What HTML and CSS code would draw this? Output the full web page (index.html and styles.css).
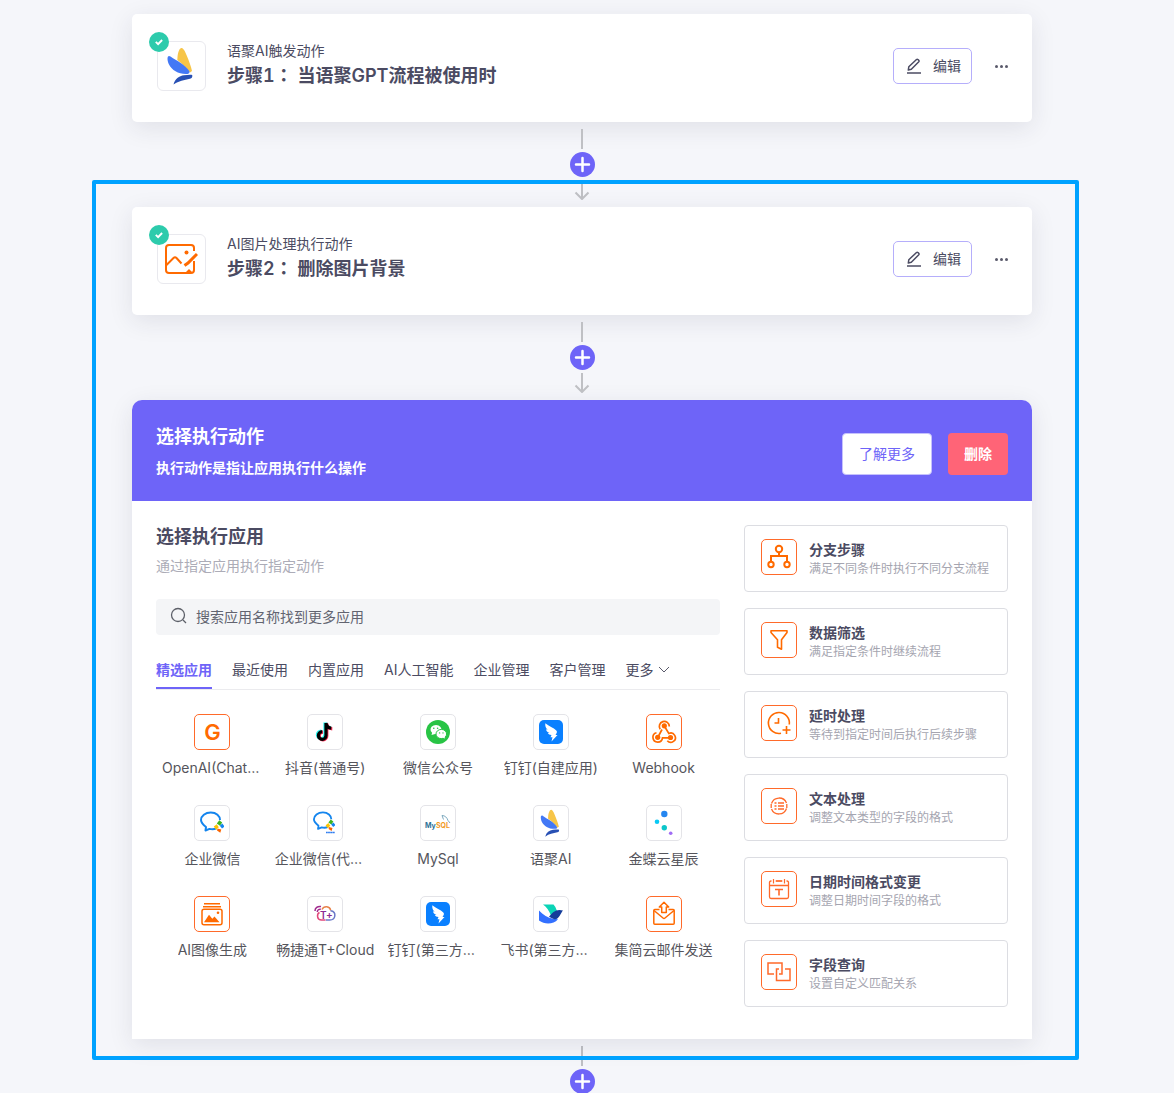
FILE: index.html
```html
<!DOCTYPE html>
<html lang="zh-CN">
<head>
    <meta charset="UTF-8">
    <meta name="viewport" content="width=device-width, initial-scale=1.0">
    <title>流程编辑</title>
    <link rel="stylesheet" href="styles.css">
</head>
<body>
    <!-- shared icons -->
    <svg class="sprite" aria-hidden="true">
        <symbol id="i-check" viewBox="0 0 20 20">
            <circle cx="10" cy="10" r="10" fill="#2dcbac"/>
            <path d="M6.8 9.9l2.3 2.3 4-4.2" fill="none" stroke="#fff" stroke-width="1.9"/>
        </symbol>
        <symbol id="i-pen" viewBox="0 0 16 16">
            <path d="M1 15h14" fill="none" stroke="currentColor" stroke-width="1.5"/>
            <path d="M2.3 12l.5-3.2 7.7-7.3q.7-.6 1.4 0l.9.9q.6.7 0 1.4L5.300 11.300z" fill="none" stroke="currentColor" stroke-width="1.5" stroke-linejoin="round"/>
        </symbol>
        <symbol id="i-arrow" viewBox="0 0 16 20">
            <path d="M8 0v19M1.500 12.500L8 19l6.500-6.500" fill="none" stroke="#bfc0c4" stroke-width="2"/>
        </symbol>
        <symbol id="i-plus" viewBox="0 0 25 25">
            <circle cx="12.500" cy="12.500" r="12.500" fill="#6e64f8"/>
            <path d="M12.500 6v13M6 12.500h13" stroke="#fff" stroke-width="2.500" stroke-linecap="round"/>
        </symbol>
        <symbol id="i-wing" viewBox="0 0 26 38">
            <path d="M10.500 10C11 5 12.500 1 14.500 1c1.500 0 3 2 5 7 2.500 6 4.500 11 5.500 16l-2 1.500C19 20 13 15 10.300 13z" fill="#f7c548"/>
            <path d="M.5 12C.4 9 1.800 8.300 3.500 9.500 10 14 18 17.500 22.300 24c.6 1.500 0 2.700-1.800 2.900C12 27.500 5 23.500 2 17.500.9 15.300.6 13.500.5 12z" fill="#4378f5"/>
            <path d="M6.500 37.500C8 32 12 29 17 28.300c3.500-.5 6.500-.8 8.200-.3.500 2-.3 3.200-2.200 3.700-6 1.300-11 2-16.500 5.800z" fill="#2850b4"/>
        </symbol>
        <symbol id="i-ding" viewBox="0 0 24 24">
            <rect width="24" height="24" rx="5" fill="#0a80ff"/>
            <path d="M6.300 3.200c3.700 3 8.200 4.300 11 7.300.8.900.8 1.800.2 2.800l-1 1.700h2l-6 6.500 1-4.300h-2l1-2.200c-1.900-.2-3-.9-3.700-2.100l1.700.1C8.300 12.200 7.300 11 7 9.300l1.700.5C6.800 8 6 5.900 6.300 3.200z" fill="#fff"/>
        </symbol>
        <symbol id="i-wecom" viewBox="0 0 24 24">
            <path d="M16.500 17.400c-2 .9-4.500 1.200-7 .5l-4 1.600.5-3.500C2.800 13.500 1 11.200 1 9c0-4 4.300-7.500 9.800-7.500S20 5 20 9" fill="none" stroke="#1485ee" stroke-width="2" stroke-linejoin="round"/>
            <path d="M19.300 9.300l2.900 2.200-2.200 3.300-3.200-2.300z" fill="#3cb421"/>
            <path d="M22.300 12.500l2.200 3-2.500 2-2.200-2.800z" fill="#1485ee"/>
            <path d="M17.500 17.500l3.800 1-1 3.300-3.300-2.300z" fill="#fb6500"/>
            <path d="M13.800 15.500l3-2.300 2 3-2.800 2.500z" fill="#fdc300"/>
        </symbol>
    </svg>

    <main class="flow">
        <section class="card">
            <div class="card-icon">
                <svg class="wing" aria-hidden="true"><use href="#i-wing"/></svg>
                <svg class="check" aria-hidden="true"><use href="#i-check"/></svg>
            </div>
            <div class="card-text">
                <p>语聚AI触发动作</p>
                <h2>步骤1<span class="colon" lang="zh-TW">：</span> 当语聚GPT流程被使用时</h2>
            </div>
            <button type="button" class="edit"><svg aria-hidden="true"><use href="#i-pen"/></svg>编辑</button>
            <button type="button" class="dots" aria-label="更多操作"><i></i><i></i><i></i></button>
        </section>

        <div class="connector">
            <span class="line"></span>
            <button type="button" class="add" aria-label="添加步骤"><svg aria-hidden="true"><use href="#i-plus"/></svg></button>
            <svg class="arrow" aria-hidden="true"><use href="#i-arrow"/></svg>
        </div>

        <div class="group">
            <section class="card">
                <div class="card-icon">
                    <svg class="photo" viewBox="0 0 34 32" fill="none" stroke="#ff6a00" stroke-width="2" aria-hidden="true">
                        <path d="M30 8V5q0-3-3-3H5Q2 2 2 5v22q0 3 3 3h22q3 0 3-3v-9"/>
                        <path d="M2.500 22l7-7q1.500-1.500 3 0l5 5.500"/>
                        <path d="M20.500 22.500l3.500-2.500 9-9" stroke-width="3"/>
                        <circle cx="22.500" cy="9.500" r="2" fill="#ff6a00" stroke="none"/>
                        <path d="M22 29l3-3 3 3z" fill="#ff6a00" stroke="none"/>
                    </svg>
                    <svg class="check" aria-hidden="true"><use href="#i-check"/></svg>
                </div>
                <div class="card-text">
                    <p>AI图片处理执行动作</p>
                    <h2>步骤2<span class="colon" lang="zh-TW">：</span> 删除图片背景</h2>
                </div>
                <button type="button" class="edit"><svg aria-hidden="true"><use href="#i-pen"/></svg>编辑</button>
                <button type="button" class="dots" aria-label="更多操作"><i></i><i></i><i></i></button>
            </section>

            <div class="connector">
                <span class="line"></span>
                <button type="button" class="add" aria-label="添加步骤"><svg aria-hidden="true"><use href="#i-plus"/></svg></button>
                <svg class="arrow" aria-hidden="true"><use href="#i-arrow"/></svg>
            </div>

            <section class="panel">
                <header class="panel-head">
                    <div class="panel-title">
                        <h2>选择执行动作</h2>
                        <p>执行动作是指让应用执行什么操作</p>
                    </div>
                    <button type="button" class="learn">了解更多</button>
                    <button type="button" class="delete">删除</button>
                </header>
                <div class="panel-body">
                    <div class="choose">
                        <h3>选择执行应用</h3>
                        <p class="hint">通过指定应用执行指定动作</p>
                        <label class="search">
                            <svg viewBox="0 0 18 18" aria-hidden="true"><circle cx="8" cy="7" r="6.500"/><path d="M13 12l3 3"/></svg>
                            <input type="text" placeholder="搜索应用名称找到更多应用" aria-label="搜索应用">
                        </label>
                        <nav class="tabs">
                            <button type="button" class="active">精选应用</button>
                            <button type="button">最近使用</button>
                            <button type="button">内置应用</button>
                            <button type="button">AI人工智能</button>
                            <button type="button">企业管理</button>
                            <button type="button">客户管理</button>
                            <button type="button">更多<svg viewBox="0 0 12 8" aria-hidden="true"><path d="M1 1l5 5 5-5"/></svg></button>
                        </nav>
                        <div class="apps">
                            <button type="button" class="app">
                                <span class="tile orange letter">G</span>
                                <span class="name">OpenAI(ChatGPT)</span>
                            </button>
                            <button type="button" class="app">
                                <span class="tile"><svg viewBox="0 0 24 24" aria-hidden="true">
                                    <g fill="none" stroke-width="3.200">
                                        <path d="M12 2.500v12.300a3.800 3.800 0 1 1-3.800-3.800M12 2.500c.3 3 2.300 5 5.500 5.200" stroke="#25f4ee"/>
                                        <path d="M13.800 3.700V16A3.800 3.800 0 1 1 10 12.200M13.800 3.700c.3 3 2.300 5 5.500 5.200" stroke="#fe2c55"/>
                                        <path d="M13 3v12.500a3.800 3.800 0 1 1-3.800-3.800M13 3c.3 3 2.300 5 5.300 5.200" stroke="#000"/>
                                    </g>
                                </svg></span>
                                <span class="name">抖音(普通号)</span>
                            </button>
                            <button type="button" class="app">
                                <span class="tile"><svg viewBox="0 0 24 24" aria-hidden="true">
                                    <circle cx="12" cy="12" r="12" fill="#28c445"/>
                                    <path d="M5.500 15l.6-2.200a5.500 4.600 0 1 1 3 1.300z" fill="#fff"/>
                                    <ellipse cx="15.300" cy="14" rx="5.300" ry="4.600" fill="#fff" stroke="#28c445"/>
                                    <path d="M16.500 17.500l2.500 1-.5-2z" fill="#fff"/>
                                    <g fill="#28c445"><circle cx="7.800" cy="8.200" r=".8"/><circle cx="11.600" cy="8.200" r=".8"/><circle cx="13.600" cy="12.900" r=".7"/><circle cx="17" cy="12.900" r=".7"/></g>
                                </svg></span>
                                <span class="name">微信公众号</span>
                            </button>
                            <button type="button" class="app">
                                <span class="tile"><svg aria-hidden="true"><use href="#i-ding"/></svg></span>
                                <span class="name">钉钉(自建应用)</span>
                            </button>
                            <button type="button" class="app">
                                <span class="tile orange"><svg viewBox="0 0 24 24" fill="none" stroke="#ff6a00" stroke-width="1.700" aria-hidden="true">
                                    <path d="M8.200 9.300A5 5 0 1 1 17.300 6.500"/>
                                    <path d="M12.300 6l4.500 7.500a4.600 4.600 0 1 1-1.500 7.200"/>
                                    <path d="M10 9.500L6 17M4.500 12.700a4.800 4.800 0 1 0 6 5.200h8"/>
                                    <g fill="#ff6a00" stroke="none"><circle cx="12.300" cy="5.800" r="2.600"/><circle cx="5.700" cy="17.300" r="2.600"/><circle cx="18.500" cy="17.500" r="2.600"/></g>
                                </svg></span>
                                <span class="name">Webhook</span>
                            </button>
                            <button type="button" class="app">
                                <span class="tile"><svg aria-hidden="true"><use href="#i-wecom"/></svg></span>
                                <span class="name">企业微信</span>
                            </button>
                            <button type="button" class="app">
                                <span class="tile"><svg viewBox="0 0 24 24" aria-hidden="true">
                                    <use href="#i-wecom" width="22" height="22"/>
                                    <path d="M13 21.500h9" stroke="#2f7df0" stroke-width="1.500" stroke-dasharray="1.800 .3"/>
                                </svg></span>
                                <span class="name">企业微信(代开发应用)</span>
                            </button>
                            <button type="button" class="app">
                                <span class="tile"><svg class="wide" viewBox="0 0 28 24" aria-hidden="true">
                                    <text x="1" y="17" fill="#2c7197">My</text>
                                    <text x="12" y="17" fill="#f29a1f">SQL</text>
                                    <path d="M18 4.500c3 0 5 2 6 5l2 2.500M18 4.500l1.500 4" fill="none" stroke="#6fa0b8" stroke-width=".9"/>
                                </svg></span>
                                <span class="name">MySql</span>
                            </button>
                            <button type="button" class="app">
                                <span class="tile"><svg class="small-wing" aria-hidden="true"><use href="#i-wing"/></svg></span>
                                <span class="name">语聚AI</span>
                            </button>
                            <button type="button" class="app">
                                <span class="tile"><svg viewBox="0 0 24 24" aria-hidden="true">
                                    <circle cx="12.300" cy="3" r="3.200" fill="#2486f0"/>
                                    <circle cx="5" cy="10.800" r="2.300" fill="#09c9f5"/>
                                    <circle cx="12.300" cy="16.700" r="2.700" fill="#0cc6ca"/>
                                    <circle cx="18.700" cy="22.200" r="1.800" fill="#a06cf5"/>
                                </svg></span>
                                <span class="name">金蝶云星辰</span>
                            </button>
                            <button type="button" class="app">
                                <span class="tile orange"><svg viewBox="0 0 24 24" fill="none" stroke="#ff6a00" stroke-width="1.500" aria-hidden="true">
                                    <path d="M4 1.700h16M3 4.700h18"/>
                                    <rect x="2" y="7.300" width="20" height="15.500" rx="2"/>
                                    <path d="M4 20.300l5-7.500 3.300 4 2.200-2.300 5 5.800z" fill="#ff6a00" stroke="none"/>
                                    <circle cx="18" cy="10.700" r="1.300" fill="#ff6a00" stroke="none"/>
                                </svg></span>
                                <span class="name">AI图像生成</span>
                            </button>
                            <button type="button" class="app">
                                <span class="tile"><svg class="tplus" viewBox="0 0 24 24" aria-hidden="true">
                                    <g fill="none" stroke-width="1.500">
                                        <path d="M2 9c0-3 2.500-5 6-4.500M4.300 10c0-2 1.500-3 3.500-2.800" stroke="#a12a8e"/>
                                        <path d="M9 7.500c2-4 8-3.500 8.700 1" stroke="#e8824a"/>
                                        <path d="M17.500 8.800c3.500.2 4.700 2.700 4.300 5.200-.4 2.700-2.800 4-5 4h-4" stroke="#6a79c8"/>
                                        <path d="M6.500 10.500c-3 1.500-2.700 7.500 2 7.500h4" stroke="#e2477a"/>
                                    </g>
                                    <text x="7" y="16.500" fill="#8c2a92">T+</text>
                                </svg></span>
                                <span class="name">畅捷通T+Cloud</span>
                            </button>
                            <button type="button" class="app">
                                <span class="tile"><svg aria-hidden="true"><use href="#i-ding"/></svg></span>
                                <span class="name">钉钉(第三方应用)</span>
                            </button>
                            <button type="button" class="app">
                                <span class="tile"><svg viewBox="0 0 24 24" aria-hidden="true">
                                    <path d="M4 2.500h10.500q2.500 2.500 3.500 6.500l-6 4.500C10 8.500 7.500 5 4 2.500z" fill="#0bd4b6"/>
                                    <path d="M0 8.500c4 4.500 9 7.300 14 8.300l5 .4C14.500 22.500 6 23 0 18.500z" fill="#3370ff"/>
                                    <path d="M10 14.800c3.500-4.800 7.500-8.300 14-6.300-2.500 2.500-3.500 9-8.500 8.700q-2.500-.5-5.500-2.400z" fill="#133c9a"/>
                                </svg></span>
                                <span class="name">飞书(第三方应用)</span>
                            </button>
                            <button type="button" class="app">
                                <span class="tile orange"><svg viewBox="0 0 24 24" fill="none" stroke="#ff6a00" stroke-width="1.500" stroke-linejoin="round" aria-hidden="true">
                                    <path d="M7.500 7.500H2.800q-1 0-1 1v12.700q0 1 1 1h18.400q1 0 1-1V8.500q0-1-1-1h-4.700"/>
                                    <path d="M2 8.500l9 7.500q1 .8 2 0l9-7.500"/>
                                    <path d="M12 .3L7.300 5h2.400v5.500h4.600V5h2.400z" fill="#fff"/>
                                </svg></span>
                                <span class="name">集简云邮件发送</span>
                            </button>
                        </div>
                    </div>

                    <div class="tools">
                        <button type="button" class="tool">
                            <span class="tile orange"><svg viewBox="0 0 24 24" fill="none" stroke="#ff6a00" stroke-width="2" aria-hidden="true">
                                <circle cx="12" cy="4" r="3.200"/><circle cx="4" cy="19.500" r="2.700"/><circle cx="20" cy="19.500" r="2.700"/>
                                <path d="M12 7v4M4 17v-6h16v6"/>
                            </svg></span>
                            <span class="tool-text"><strong>分支步骤</strong><small>满足不同条件时执行不同分支流程</small></span>
                        </button>
                        <button type="button" class="tool">
                            <span class="tile orange"><svg viewBox="0 0 24 24" fill="none" stroke="#ff6a00" stroke-width="1.600" stroke-linejoin="round" aria-hidden="true">
                                <path d="M4 2.800h16v1.700l-5.500 7.200v9.500l-4-2v-7.500L4 4.500z"/>
                            </svg></span>
                            <span class="tool-text"><strong>数据筛选</strong><small>满足指定条件时继续流程</small></span>
                        </button>
                        <button type="button" class="tool">
                            <span class="tile orange"><svg viewBox="0 0 24 24" fill="none" stroke="#ff6a00" stroke-width="1.600" aria-hidden="true">
                                <path d="M22.300 13.500A10.500 10.500 0 1 0 14 22.300"/>
                                <path d="M11.500 7v5H7.500M19.500 15v8M15.500 19h8"/>
                            </svg></span>
                            <span class="tool-text"><strong>延时处理</strong><small>等待到指定时间后执行后续步骤</small></span>
                        </button>
                        <button type="button" class="tool">
                            <span class="tile orange"><svg viewBox="0 0 24 24" fill="none" stroke="#ff6a2a" stroke-width="1.300" aria-hidden="true">
                                <path d="M4.500 9.500a8 8 0 0 1 15-.5M19.500 14.500a8 8 0 0 1-15 .5M4.200 10v4M19.800 10v4" stroke-dasharray="20 1"/>
                                <path d="M11 9h6M11 12h6M11 15h6M7.500 9h2M7.500 12h2M7.500 15h2"/>
                            </svg></span>
                            <span class="tool-text"><strong>文本处理</strong><small>调整文本类型的字段的格式</small></span>
                        </button>
                        <button type="button" class="tool">
                            <span class="tile orange"><svg viewBox="0 0 24 24" fill="none" stroke="#ff6a2a" stroke-width="1.300" aria-hidden="true">
                                <path d="M4.500 4H4Q2.500 4 2.500 5.500v14.200Q2.500 21.500 4 21.500h16q1.500 0 1.500-1.800V5.500Q21.500 4 20 4h-.500M9 4h6M2.500 8.500h19"/>
                                <path d="M6.500 2v4.500M17.500 2v4.500M8.500 4h7" stroke-width="1.200"/>
                                <path d="M8 12.500h8M12 12.500v6" stroke-width="1.600"/>
                            </svg></span>
                            <span class="tool-text"><strong>日期时间格式变更</strong><small>调整日期时间字段的格式</small></span>
                        </button>
                        <button type="button" class="tool">
                            <span class="tile orange"><svg viewBox="0 0 24 24" fill="none" stroke="#ff6a2a" stroke-width="1.500" aria-hidden="true">
                                <path d="M7 14H1V3h14v11h-3"/>
                                <path d="M12 9H9.500v11.500H23V9h-5"/>
                            </svg></span>
                            <span class="tool-text"><strong>字段查询</strong><small>设置自定义匹配关系</small></span>
                        </button>
                    </div>
                </div>
            </section>
            <div class="highlight"></div>
        </div>

        <div class="connector">
            <span class="line"></span>
            <button type="button" class="add" aria-label="添加步骤"><svg aria-hidden="true"><use href="#i-plus"/></svg></button>
            <svg class="arrow" aria-hidden="true"><use href="#i-arrow"/></svg>
        </div>
    </main>
</body>
</html>
```
FILE: styles.css
```css
* {
    box-sizing: border-box;
}
body {
    margin: 0;
    padding: 14px 10px 0 0;
    height: 100vh;
    overflow: hidden;
    background-color: #f5f6fa;
    color: #4b4b62;
    font-family: Inter, "Noto Sans CJK SC", sans-serif;
    font-size: 14px;
    line-height: 20px;
}
h2, h3, p {
    margin: 0;
}
h2, h3 {
    font-size: 18px;
    font-weight: 600;
    line-height: 26px;
}
button {
    padding: 0;
    border: none;
    background: none;
    color: inherit;
    font: inherit;
    cursor: pointer;
}
svg {
    display: block;
    flex: none;
}
.sprite {
    position: absolute;
    width: 0;
    height: 0;
}
.flow {
    max-width: 900px;
    margin: 0 auto;
}

/* step cards */
.card {
    display: flex;
    align-items: flex-start;
    height: 108px;
    padding: 27px 24px 0 25px;
    background: #fff;
    border-radius: 5px;
    box-shadow: 0 6px 24px rgba(40, 40, 70, 0.1);
}
.card-icon {
    position: relative;
    display: flex;
    align-items: center;
    justify-content: center;
    width: 49px;
    height: 50px;
    padding-right: 2px;
    border: 1px solid #e9e9ee;
    border-radius: 6px;
}
.check {
    position: absolute;
    top: -10px;
    left: -9px;
    width: 20px;
    height: 20px;
}
.wing {
    width: 26px;
    height: 38px;
    margin-right: 2px;
}
.photo {
    width: 34px;
    height: 32px;
}
.card-text {
    flex: 1;
    padding-left: 21px;
}
.card-text h2 {
    margin-top: 2px;
    font-variant-numeric: tabular-nums;
}
.colon {
    font-family: "Noto Sans CJK TC", sans-serif;
    line-height: 1;
}
.edit {
    display: flex;
    align-items: center;
    gap: 11px;
    height: 36px;
    margin: 7px 23px 0 0;
    padding: 0 10px 0 12px;
    border: 1px solid #b5aefb;
    border-radius: 5px;
}
.edit svg {
    width: 16px;
    height: 16px;
}
.dots {
    display: flex;
    align-items: center;
    gap: 2px;
    height: 36px;
    margin-top: 7px;
}
.dots i {
    width: 3px;
    height: 3px;
    border-radius: 50%;
    background: #5a5a6b;
}

/* connector between steps */
.connector {
    display: flex;
    flex-direction: column;
    align-items: center;
    gap: 3px;
    height: 85px;
    padding-top: 7px;
}
.line {
    width: 2px;
    height: 20px;
    background: #bfc0c4;
}
.add svg {
    width: 25px;
    height: 25px;
}
.arrow {
    width: 16px;
    height: 20px;
}
.group {
    position: relative;
}
.highlight {
    position: absolute;
    inset: -27px -47px -21px -40px;
    border: 4px solid #00a2ff;
    border-radius: 2px;
    pointer-events: none;
    z-index: 2;
}

/* action panel */
.panel {
    background: #fff;
    border-radius: 10px 10px 0 0;
    box-shadow: 0 6px 24px rgba(40, 40, 70, 0.1);
}
.panel-head {
    display: flex;
    align-items: center;
    gap: 16px;
    padding: 24px 24px 23px;
    background: #6e64f8;
    border-radius: 10px 10px 0 0;
    color: #fff;
}
.panel-title {
    flex: 1;
}
.panel-title h2 {
    font-weight: 700;
}
.panel-title p {
    margin-top: 8px;
    font-weight: 600;
}
.learn, .delete {
    height: 42px;
    margin-top: 6px;
    border-radius: 4px;
}
.learn {
    padding: 0 16px;
    border: 1px solid #c5c1fc;
    background: #fff;
    color: #6e64f8;
}
.delete {
    padding: 0 16px;
    background: #ff6477;
    font-weight: 700;
}
.panel-body {
    display: flex;
    gap: 24px;
    padding: 24px 24px 32px;
}
.choose {
    flex: 1;
    min-width: 0;
}
.choose h3 {
    line-height: 24px;
}
.hint {
    margin-top: 7px;
    color: #acacb7;
}
.search {
    display: flex;
    align-items: center;
    gap: 8px;
    height: 36px;
    margin-top: 23px;
    padding: 0 14px;
    border-radius: 4px;
    background: #f4f5f7;
}
.search svg {
    width: 18px;
    height: 18px;
    fill: none;
    stroke: #5d6069;
    stroke-width: 1.3;
    overflow: visible;
}
.search input {
    flex: 1;
    padding: 0;
    border: none;
    outline: none;
    background: none;
    font: inherit;
}
.search input::placeholder {
    color: #626470;
}
.tabs {
    display: flex;
    gap: 20px;
    height: 55px;
    padding-top: 18px;
    border-bottom: 1px solid #ebebee;
}
.tabs button {
    display: flex;
    align-items: center;
    gap: 5px;
    height: 36px;
    border-bottom: 2px solid transparent;
    white-space: nowrap;
}
.tabs .active {
    border-color: #6e64f8;
    color: #6e64f8;
    font-weight: 700;
}
.tabs svg {
    width: 12px;
    height: 8px;
    fill: none;
    stroke: #5a5a6b;
}
.apps {
    display: grid;
    grid-template-columns: repeat(5, 1fr);
    row-gap: 27px;
    padding-top: 24px;
}
.app {
    display: flex;
    flex-direction: column;
    align-items: center;
    gap: 8px;
    min-width: 0;
    padding: 0 6px;
    color: #55555c;
}
.name {
    max-width: 100%;
    overflow: hidden;
    white-space: nowrap;
    text-overflow: ellipsis;
}
.tile {
    display: flex;
    align-items: center;
    justify-content: center;
    flex: none;
    width: 36px;
    height: 36px;
    border: 1px solid #e4e4e8;
    border-radius: 5px;
    background: #fff;
}
.tile svg {
    width: 24px;
    height: 24px;
    overflow: visible;
}
.orange {
    border-color: #ff6a2a;
}
.letter {
    color: #ff6a00;
    font-size: 22px;
    font-weight: 600;
}
.tile .small-wing {
    width: 20px;
    height: 28px;
    margin-right: 2px;
}
.tile .wide {
    width: 28px;
}
.wide text {
    font-size: 7px;
    font-weight: 700;
}
.tplus text {
    font-size: 10px;
    font-weight: 600;
}

/* built-in tools */
.tools {
    display: flex;
    flex-direction: column;
    gap: 16px;
    width: 264px;
}
.tool {
    display: flex;
    align-items: flex-start;
    gap: 12px;
    height: 67px;
    padding: 13px 16px;
    border: 1px solid #dcdde2;
    border-radius: 4px;
    text-align: left;
}
.tool-text {
    display: flex;
    flex-direction: column;
    padding-top: 1px;
    white-space: nowrap;
}
.tool strong {
    font-weight: 600;
}
.tool small {
    color: #a5a5b0;
    font-size: 12px;
    line-height: 18px;
}
```
